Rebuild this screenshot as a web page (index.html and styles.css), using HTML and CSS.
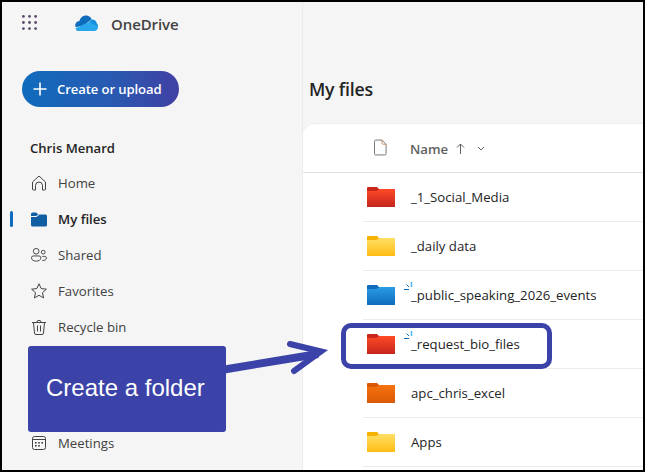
FILE: index.html
```html
<!DOCTYPE html>
<html lang="en">
<head>
<meta charset="utf-8">
<title>OneDrive</title>
<link rel="stylesheet" href="styles.css">
</head>
<body>
<div class="frame">
  <aside class="sidebar">
    <header class="brand">
      <svg class="waffle" width="15" height="15" viewBox="0 0 16 16"><g fill="#5b4a6e"><circle cx="1.500" cy="1.500" r="1.500"/><circle cx="8" cy="1.500" r="1.500"/><circle cx="14.500" cy="1.500" r="1.500"/><circle cx="1.500" cy="8" r="1.500"/><circle cx="8" cy="8" r="1.500"/><circle cx="14.500" cy="8" r="1.500"/><circle cx="1.500" cy="14.500" r="1.500"/><circle cx="8" cy="14.500" r="1.500"/><circle cx="14.500" cy="14.500" r="1.500"/></g></svg>
      <svg class="cloud" width="25" height="16" viewBox="0 0 25 17"><path fill="#0f6cbd" d="M1 13C-.5 9.500 2 6.500 5 6.300 6 2.500 9.500 0 12.800 .6 15.300 1 17 2.500 18 4.500L10 11 1 13Z"/><path fill="#1490df" d="M7 16 17.500 5C20 4.300 23 6 23.500 9 24.500 10 25 11.500 24.500 13L12 12 7 16Z"/><path fill="#28a8ea" d="M3 17C1.800 16.800 1.200 15.500 1 14L10.500 9.500 16 7.500 24.800 12.500C24.700 15 23.200 17 21 17Z"/></svg>
      <span class="brand-name">OneDrive</span>
    </header>
    <button class="create" type="button">
      <svg width="16" height="16" viewBox="0 0 16 16"><path d="M8 1.500v13M1.500 8h13" stroke="#fff" stroke-width="1.600" fill="none"/></svg>
      <span>Create or upload</span>
    </button>
    <div class="user">Chris Menard</div>
    <nav class="nav">
      <a class="nav-item"><svg class="ico" viewBox="0 0 16 16"><path d="M1.500 7 8 1l6.500 6v7a1 1 0 0 1-1 1h-2V10.500a3.500 3.500 0 0 0-7 0V15h-2a1 1 0 0 1-1-1V7Z" fill="none" stroke="#424242"/></svg>Home</a>
      <a class="nav-item active"><svg class="ico" viewBox="0 0 16 16"><path fill="#115ea3" d="M0 3a1.500 1.500 0 0 1 1.500-1.500H5L7.500 3.500 5 5H0V3Z"/><path fill="#115ea3" d="M0 6h5.500L8.500 3.500H14.500A1.500 1.500 0 0 1 16 5v9a1.500 1.500 0 0 1-1.500 1.500h-13A1.500 1.500 0 0 1 0 14V6Z"/></svg>My files</a>
      <a class="nav-item"><svg class="ico" viewBox="0 0 17 16"><g fill="none" stroke="#424242"><circle cx="5.500" cy="4" r="3"/><circle cx="13" cy="5" r="2"/><path d="M.5 11a2 2 0 0 1 2-2h6a2 2 0 0 1 2 2c0 2.500-2.500 3.500-5 3.500S.5 13.500.5 11Z"/><path d="M12 9.500h2.500a2 2 0 0 1 2 1.500c0 2-2 3-4.500 2.800"/></g></svg>Shared</a>
      <a class="nav-item"><svg class="ico" viewBox="0 0 16 16"><path d="M8 .8l2.200 4.800 5.200.6-3.900 3.500 1.100 5.200L8 12.300 3.400 14.900l1.100-5.200L.6 6.200l5.200-.6L8 .8Z" fill="none" stroke="#424242"/></svg>Favorites</a>
      <a class="nav-item"><svg class="ico" viewBox="0 0 16 16"><g fill="none" stroke="#424242"><path d="M1 3.500h14M5.800 3.500a2.200 2.200 0 0 1 4.400 0M2.500 3.500l1 10.500a1.500 1.500 0 0 0 1.500 1.500h6a1.500 1.500 0 0 0 1.500-1.500l1-10.500M6.500 6.500v6M9.500 6.500v6"/></g></svg>Recycle bin</a>
      <a class="nav-item meetings"><svg class="ico" viewBox="0 0 16 16"><g fill="none" stroke="#424242"><rect x="1.500" y="1.500" width="13" height="13" rx="2"/><path d="M1.500 4.500h13"/></g><g fill="#424242"><rect x="4" y="7" width="1.600" height="1.600"/><rect x="7.200" y="7" width="1.600" height="1.600"/><rect x="10.400" y="7" width="1.600" height="1.600"/><rect x="4" y="10" width="1.600" height="1.600"/><rect x="7.200" y="10" width="1.600" height="1.600"/></g></svg>Meetings</a>
    </nav>
  </aside>
  <main class="content">
    <h1 class="title">My files</h1>
    <section class="card">
      <div class="head">
        <svg class="file-ico" width="13" height="17" viewBox="0 0 14 17"><path d="M1.500.5h7l4.500 4.500v10a1.500 1.500 0 0 1-1.500 1.500h-10A1.500 1.500 0 0 1 .5 15V2A1.500 1.500 0 0 1 1.500.5Z" fill="#fff" stroke="#6b6b6b"/><path d="M8.500.5v3a1.500 1.500 0 0 0 1.500 1.500h3" fill="none" stroke="#c98a5a"/></svg>
        <span class="head-name">Name</span>
        <svg class="head-arrow" width="9" height="11" viewBox="0 0 9 11"><path d="M4.500 11V1M1 4.500 4.500 1 8 4.500" fill="none" stroke="#616161"/></svg>
        <svg class="chev" width="8" height="5" viewBox="0 0 8 5"><path d="M1 1l3 3 3-3" fill="none" stroke="#616161"/></svg>
      </div>
      <div class="row">
        <svg class="folder" viewBox="0 0 28 20"><use href="#f-red"/></svg>
        <span class="row-name">_1_Social_Media</span>
      </div>
      <div class="row">
        <svg class="folder" viewBox="0 0 28 20"><use href="#f-yellow"/></svg>
        <span class="row-name">_daily data</span>
      </div>
      <div class="row">
        <svg class="folder" viewBox="0 0 28 20"><use href="#f-blue"/></svg>
        <span class="row-name"><svg class="spark" width="9" height="9" viewBox="0 0 9 9"><path d="M0 7.500h5" stroke="#0f6cbd" fill="none"/><path d="M2.500 2.500 5 5" stroke="#0f6cbd" fill="none"/><path d="M7.500 0v5" stroke="#4fb6f0" stroke-width="1.500" fill="none"/></svg>_public_speaking_2026_events</span>
      </div>
      <div class="row">
        <svg class="folder" viewBox="0 0 28 20"><use href="#f-red"/></svg>
        <span class="row-name"><svg class="spark" width="9" height="9" viewBox="0 0 9 9"><path d="M0 7.500h5" stroke="#0f6cbd" fill="none"/><path d="M2.500 2.500 5 5" stroke="#0f6cbd" fill="none"/><path d="M7.500 0v5" stroke="#4fb6f0" stroke-width="1.500" fill="none"/></svg>_request_bio_files</span>
      </div>
      <div class="row">
        <svg class="folder" viewBox="0 0 28 20"><use href="#f-orange"/></svg>
        <span class="row-name">apc_chris_excel</span>
      </div>
      <div class="row">
        <svg class="folder" viewBox="0 0 28 20"><use href="#f-yellow"/></svg>
        <span class="row-name">Apps</span>
      </div>
    </section>
  </main>

  <div class="callout">Create a folder</div>
  <svg class="arrow" width="110" height="60" viewBox="0 0 110 60">
    <path d="M0 35.500 94 20" stroke="#3b43a8" stroke-width="8" fill="none"/>
    <path d="M66 10 97 17.500 70 37" stroke="#3b43a8" stroke-width="6" stroke-linejoin="miter" stroke-linecap="round" fill="none"/>
  </svg>
  <div class="highlight"></div>
</div>

<svg class="defs" width="0" height="0" aria-hidden="true">
  <defs>
    <linearGradient id="g-red" x1="0" y1="0" x2="0" y2="1"><stop offset="0" stop-color="#ff4a26"/><stop offset="1" stop-color="#c4261d"/></linearGradient>
    <linearGradient id="g-yellow" x1="0" y1="0" x2="0" y2="1"><stop offset="0" stop-color="#ffdf66"/><stop offset="1" stop-color="#ffbd14"/></linearGradient>
    <linearGradient id="g-blue" x1="0" y1="0" x2="0" y2="1"><stop offset="0" stop-color="#2a9be6"/><stop offset="1" stop-color="#0f6cbd"/></linearGradient>
    <linearGradient id="g-orange" x1="0" y1="0" x2="0" y2="1"><stop offset="0" stop-color="#f7730f"/><stop offset="1" stop-color="#d95a05"/></linearGradient>
    <symbol id="f-red" viewBox="0 0 28 20"><path fill="#c9271c" d="M0 1a1 1 0 0 1 1-1h9l3 3v4H0Z"/><path fill="url(#g-red)" d="M0 4h9.500L12.500 2H28v17.500a.5.500 0 0 1-.5.500H.5a.5.500 0 0 1-.5-.5Z"/></symbol>
    <symbol id="f-yellow" viewBox="0 0 28 20"><path fill="#f5b300" d="M0 1a1 1 0 0 1 1-1h9l3 3v4H0Z"/><path fill="url(#g-yellow)" d="M0 4h9.500L12.500 2H28v17.500a.5.500 0 0 1-.5.500H.5a.5.500 0 0 1-.5-.5Z"/></symbol>
    <symbol id="f-blue" viewBox="0 0 28 20"><path fill="#0f6cbd" d="M0 1a1 1 0 0 1 1-1h9l3 3v4H0Z"/><path fill="url(#g-blue)" d="M0 4h9.500L12.500 2H28v17.500a.5.500 0 0 1-.5.500H.5a.5.500 0 0 1-.5-.5Z"/></symbol>
    <symbol id="f-orange" viewBox="0 0 28 20"><path fill="#d95a05" d="M0 1a1 1 0 0 1 1-1h9l3 3v4H0Z"/><path fill="url(#g-orange)" d="M0 4h9.500L12.500 2H28v17.500a.5.500 0 0 1-.5.500H.5a.5.500 0 0 1-.5-.5Z"/></symbol>
  </defs>
</svg>
</body>
</html>
```

FILE: styles.css
```css
* { box-sizing: border-box; }
html, body { margin: 0; padding: 0; }
body {
  width: 645px;
  height: 472px;
  overflow: hidden;
  font-family: "Open Sans", "Noto Sans", sans-serif;
  color: #242424;
}
.frame {
  position: relative;
  display: flex;
  width: 645px;
  height: 472px;
  border: 2px solid #000;
  background: #f5f5f5;
  overflow: hidden;
}
.sidebar {
  width: 301px;
  flex: none;
  display: flex;
  flex-direction: column;
  border-right: 1px solid #ececec;
}
.brand {
  display: flex;
  align-items: center;
  height: 44px;
  padding-left: 20px;
}
.waffle { margin: 0 37px 3px 0; }
.cloud { margin: 0 12px 2px 0; }
.brand-name {
  font-size: 15px;
  font-weight: 600;
  color: #424242;
  letter-spacing: -0.1px;
}
.create {
  display: flex;
  align-items: center;
  gap: 9px;
  width: 157px;
  height: 36px;
  margin: 25px 0 0 20px;
  padding: 0 0 0 10px;
  border: 0;
  border-radius: 18px;
  background: linear-gradient(90deg, #0f6cbd 0%, #2b58b0 60%, #4040a4 100%);
  color: #fff;
  font-family: inherit;
  font-size: 13.100px;
  font-weight: 600;
  letter-spacing: -0.1px;
}
.user {
  margin: 30px 0 0 28px;
  height: 22px;
  line-height: 22px;
  font-size: 13.100px;
  font-weight: 600;
}
.nav {
  display: flex;
  flex-direction: column;
  margin-top: 6px;
  padding-left: 29px;
}
.nav-item {
  position: relative;
  display: flex;
  align-items: center;
  gap: 11px;
  height: 36px;
  font-size: 13.200px;
  color: #424242;
}
.nav-item.active { color: #242424; font-weight: 600; }
.nav-item.active::before {
  content: "";
  position: absolute;
  left: -21px;
  top: 10px;
  width: 3px;
  height: 16px;
  border-radius: 2px;
  background: #0f6cbd;
}
.meetings { margin-top: 80px; }
.ico { width: 16px; height: 16px; flex: none; }
.content {
  flex: 1;
  min-width: 0;
  display: flex;
  flex-direction: column;
}
.title {
  margin: 0;
  height: 121px;
  padding: 74px 0 0 6px;
  font-size: 17.700px;
  line-height: 26px;
  font-weight: 600;
  color: #242424;
  letter-spacing: -0.2px;
}
.card {
  flex: 1;
  background: #fff;
  border-top-left-radius: 12px;
  border-top: 1px solid #ececec;
}
.head {
  display: flex;
  align-items: center;
  height: 49px;
  padding: 1px 0 0 71px;
  border-bottom: 1px solid #e0e0e0;
  color: #616161;
  font-size: 13.200px;
  font-weight: 600;
}
.file-ico { margin: -2px 23px 0 0; }
.head-arrow { margin-left: 8px; }
.chev { margin-left: 12px; }
.row {
  display: flex;
  align-items: center;
  height: 49px;
  margin-left: 60px;
  padding-left: 4px;
  border-bottom: 1px solid #ececec;
}
.folder { width: 28px; height: 20px; flex: none; margin-right: 16px; }
.row-name {
  position: relative;
  font-size: 13.200px;
  color: #242424;
}
.spark {
  position: absolute;
  left: -7px;
  top: -4px;
}
.callout {
  position: absolute;
  left: 26px;
  top: 344px;
  width: 198px;
  height: 86px;
  border-radius: 3px;
  background: #3b43a8;
  color: #fff;
  font-family: "Liberation Sans", Arial, sans-serif;
  font-size: 24px;
  line-height: 84px;
  padding-left: 18px;
}
.arrow {
  position: absolute;
  left: 222px;
  top: 332px;
}
.highlight {
  position: absolute;
  left: 339px;
  top: 321px;
  width: 211px;
  height: 46px;
  border: 5px solid #3b43a8;
  border-radius: 10px;
}
.defs { position: absolute; }
```
